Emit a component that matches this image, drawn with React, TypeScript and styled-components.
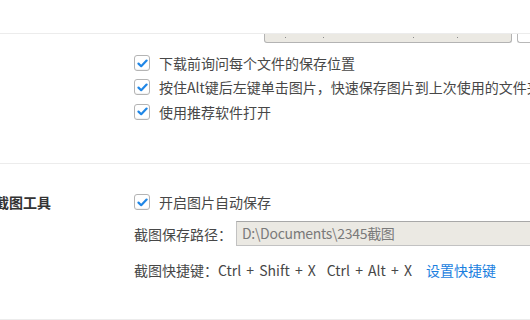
import React from "react";
import styled, { createGlobalStyle } from "styled-components";

const Global = createGlobalStyle`
  html, body { margin: 0; padding: 0; background: #fff; }
  body {
    width: 530px; height: 320px; overflow: hidden;
    font-family: "Noto Sans CJK SC", "Noto Sans", sans-serif;
    font-size: 14px; color: #505050;
  }
`;

const Page = styled.div`
  width: 530px;
  height: 320px;
  overflow: hidden;
  display: flex;
  flex-direction: column;
`;

const TopBar = styled.div`
  height: 33px;
  flex-shrink: 0;
  border-bottom: 1px solid #ececec;
`;

const Section = styled.div<{ $pt: number; $pb: number }>`
  display: grid;
  grid-template-columns: 134px 1fr;
  padding-top: ${(p) => p.$pt}px;
  padding-bottom: ${(p) => p.$pb}px;
  border-bottom: 1px solid #ececec;
  flex-shrink: 0;
`;

const Title = styled.div`
  margin-left: -5px;
  margin-top: 26px;
  height: 24px;
  line-height: 24px;
  font-weight: bold;
  color: #333;
  white-space: nowrap;
`;

const Content = styled.div`
  grid-column: 2;
  display: flex;
  flex-direction: column;
  min-width: 0;
`;

const ClipRow = styled.div`
  display: flex;
  margin-left: 130px;
  height: 9px;
  white-space: nowrap;
`;

const ClippedField = styled.div`
  width: 254px;
  height: 8px;
  background: #ebe9e3;
  border: 1px solid #b3b3b3;
  border-top: none;
  border-radius: 0 0 3px 3px;
  position: relative;
  overflow: hidden;
`;

const Speck = styled.span<{ $x: number }>`
  position: absolute;
  left: ${(p) => p.$x}px;
  top: 3px;
  width: 1px;
  height: 1px;
  background: #8a8a8a;
`;

const ClippedButton = styled.div`
  margin-left: 5px;
  width: 12px;
  height: 8px;
  background: #fff;
  border: 1px solid #b8b8b8;
  border-top: none;
  border-right: none;
  border-radius: 0 0 0 3px;
`;

const List = styled.div<{ $mt: number }>`
  margin-top: ${(p) => p.$mt}px;
  display: flex;
  flex-direction: column;
`;

const CheckRow = styled.label<{ $h?: number }>`
  display: flex;
  align-items: center;
  height: ${(p) => p.$h ?? 24}px;
  white-space: nowrap;
  color: #474747;
`;

const Box = styled.span`
  width: 14px;
  height: 14px;
  border: 1px solid #b4b4b4;
  border-radius: 3px;
  background: #fff;
  box-shadow: inset 0 -1px 1px rgba(0, 0, 0, 0.06);
  margin-right: 9px;
  display: flex;
  align-items: center;
  justify-content: center;
  flex-shrink: 0;
`;

const Check = () => (
  <Box>
    <svg width="11" height="9" viewBox="0 0 11 9">
      <path d="M1.5 4.6 L4.2 7.2 L9.6 1.6" fill="none" stroke="#1f86e6" strokeWidth="2.2" strokeLinecap="round" strokeLinejoin="round" />
    </svg>
  </Box>
);

const FieldRow = styled.div`
  margin-top: 7px;
  display: flex;
  align-items: center;
  height: 25px;
  white-space: nowrap;
  color: #474747;
`;

const Field = styled.div`
  margin-left: 4px;
  flex: 1;
  min-width: 300px;
  height: 23px;
  line-height: 23px;
  padding-left: 5px;
  letter-spacing: -0.3px;
  background: #ebe9e3;
  border: 1px solid #c2c2c2;
  border-top-color: #a8a8a8;
  border-right: none;
  color: #7a7a7a;
`;

const ShortcutRow = styled.div`
  margin-top: 12px;
  height: 24px;
  display: flex;
  align-items: center;
  white-space: nowrap;
  color: #474747;
`;

const Key = styled.span<{ $ml?: number }>`
  margin-left: ${(p) => p.$ml ?? 0}px;
  word-spacing: 2px;
`;

const Link = styled.a`
  margin-left: 14px;
  color: #1b7fe0;
  text-decoration: none;
  cursor: pointer;
`;

export default function App() {
  return (
    <>
      <Global />
      <Page>
        <TopBar />
        <Section $pt={0} $pb={39}>
          <Content>
            <ClipRow>
              <ClippedField>
                <Speck $x={20} />
                <Speck $x={58} />
                <Speck $x={148} />
                <Speck $x={192} />
              </ClippedField>
              <ClippedButton />
            </ClipRow>
            <List $mt={8}>
              <CheckRow>
                <Check />
                下载前询问每个文件的保存位置
              </CheckRow>
              <CheckRow>
                <Check />
                按住Alt键后左键单击图片，快速保存图片到上次使用的文件夹
              </CheckRow>
              <CheckRow $h={25}>
                <Check />
                使用推荐软件打开
              </CheckRow>
            </List>
          </Content>
        </Section>
        <Section $pt={0} $pb={37}>
          <Title>截图工具</Title>
          <Content>
            <List $mt={26}>
              <CheckRow>
                <Check />
                开启图片自动保存
              </CheckRow>
            </List>
            <FieldRow>
              截图保存路径：
              <Field>D:\Documents\2345截图</Field>
            </FieldRow>
            <ShortcutRow>
              截图快捷键：<Key>Ctrl + Shift + X</Key>
              <Key $ml={11}>Ctrl + Alt + X</Key>
              <Link>设置快捷键</Link>
            </ShortcutRow>
          </Content>
        </Section>
      </Page>
    </>
  );
}
